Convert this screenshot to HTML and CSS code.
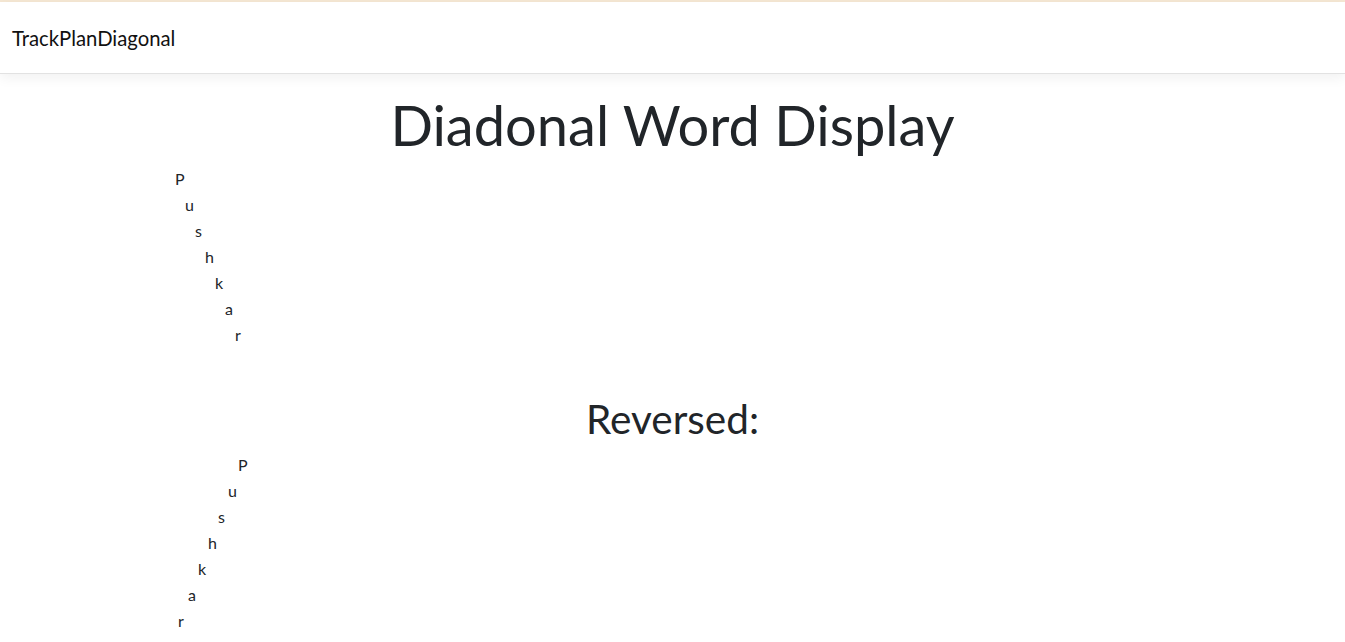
FILE: index.html
```html
<!DOCTYPE html>
<html lang="en">
<head>
<meta charset="utf-8">
<title>TrackPlanDiagonal</title>
<link rel="stylesheet" href="styles.css">
</head>
<body>
<div class="topline"></div>
<nav class="navbar"><span class="brand">TrackPlanDiagonal</span></nav>
<main class="content">
  <h1 class="title">Diadonal Word Display</h1>
  <div class="diag">
    <div class="ch s0">P</div>
    <div class="ch s1">u</div>
    <div class="ch s2">s</div>
    <div class="ch s3">h</div>
    <div class="ch s4">k</div>
    <div class="ch s5">a</div>
    <div class="ch s6">r</div>
  </div>
  <h2 class="subtitle">Reversed:</h2>
  <div class="diag diag-rev">
    <div class="ch s6">P</div>
    <div class="ch s5">u</div>
    <div class="ch s4">s</div>
    <div class="ch s3">h</div>
    <div class="ch s2">k</div>
    <div class="ch s1">a</div>
    <div class="ch s0">r</div>
  </div>
</main>
</body>
</html>
```

FILE: styles.css
```css
html, body {
  margin: 0;
  padding: 0;
  background: #fff;
  font-family: Lato, "Liberation Sans", sans-serif;
  color: #212529;
}
.topline {
  height: 2px;
  background: #f5e7d3;
}
.navbar {
  height: 71px;
  display: flex;
  align-items: center;
  padding: 0 12px;
  background: #fff;
  border-bottom: 1px solid #e2e2e2;
  box-shadow: 0 4px 12px rgba(0,0,0,0.06);
  position: relative;
}
.brand {
  font-size: 20.3px;
  color: #111;
}
.content {
  padding-top: 17px;
}
.title {
  margin: 0;
  text-align: center;
  font-size: 56px;
  font-weight: 400;
  line-height: 1.2;
}
.subtitle {
  margin: 47px 0 0;
  text-align: center;
  font-size: 40.5px;
  font-weight: 400;
  line-height: 1.2;
}
.diag {
  padding-left: 175px;
  margin-top: 8px;
}
.diag-rev {
  padding-left: 178px;
}
.ch {
  font-size: 16px;
  line-height: 26px;
  height: 26px;
}
.s0 { margin-left: 0; }
.s1 { margin-left: 10px; }
.s2 { margin-left: 20px; }
.s3 { margin-left: 30px; }
.s4 { margin-left: 40px; }
.s5 { margin-left: 50px; }
.s6 { margin-left: 60px; }
```
